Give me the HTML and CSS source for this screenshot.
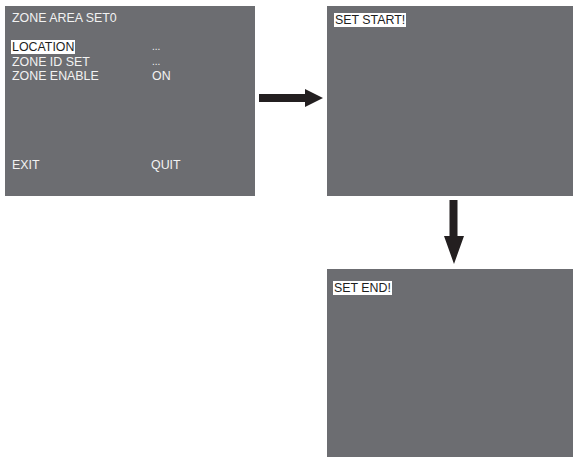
FILE: index.html
```html
<!DOCTYPE html>
<html>
  <head>
    <title>Zone Area Set</title>
    <link rel="stylesheet" href="styles.css">
  </head>
  <body>
    <div class="flow">
      <div class="screen menu">
        <div class="menu-title">ZONE AREA SET0</div>
        <div class="menu-list">
          <span class="label"><span class="selected">LOCATION</span></span>
          <span class="value dots">...</span>
          <span class="label">ZONE ID SET</span>
          <span class="value dots">...</span>
          <span class="label">ZONE ENABLE</span>
          <span class="value">ON</span>
        </div>
        <div class="menu-list menu-foot">
          <span class="label">EXIT</span>
          <span class="value">QUIT</span>
        </div>
      </div>

      <div class="arrow-cell">
        <svg class="arrow-right" width="64" height="18" viewBox="0 0 64 18">
          <path d="M0 5 H46 V0 L64 9 L46 18 V13 H0 Z" fill="#231f20"/>
        </svg>
      </div>

      <div class="screen start">
        <span class="selected">SET START!</span>
      </div>

      <div></div>
      <div></div>

      <div class="arrow-cell">
        <svg class="arrow-down" width="20" height="64" viewBox="0 0 20 64">
          <path d="M5.5 0 H13.5 V36 H20 L10 64 L0 36 H5.5 Z" fill="#231f20"/>
        </svg>
      </div>

      <div></div>
      <div></div>

      <div class="screen end">
        <span class="selected">SET END!</span>
      </div>
    </div>
  </body>
</html>
```

FILE: styles.css
```css
body {
  margin: 0;
  padding: 6px 0 0 5px;
  background: #ffffff;
  font-family: "Liberation Sans", Arial, sans-serif;
  font-size: 12.4px;
  line-height: 14.5px;
}
.flow {
  display: grid;
  grid-template-columns: 250px 72px 246px;
  grid-template-rows: 190px 73px 188px;
}
.screen {
  background-color: #6c6d71;
  color: #f2f2f2;
}
.menu {
  display: flex;
  flex-direction: column;
  padding: 5px 7px 24px 7px;
  box-sizing: border-box;
}
.menu-title {
  margin-bottom: 14.5px;
}
.menu-list {
  display: grid;
  grid-template-columns: 140px auto;
}
.menu-foot {
  margin-top: auto;
  grid-template-columns: 139px auto;
}
.selected {
  background-color: #ffffff;
  color: #1e1e1e;
  padding: 0 1px;
  margin-left: -1px;
}
.dots {
  font-size: 10px;
}
.start {
  padding: 7px 8px;
}
.end {
  padding: 12px 7px;
}
.arrow-cell {
  display: flex;
  align-items: flex-start;
}
.arrow-right {
  margin: 83px 0 0 4px;
}
.arrow-down {
  margin: 4px 0 0 117px;
}
```
